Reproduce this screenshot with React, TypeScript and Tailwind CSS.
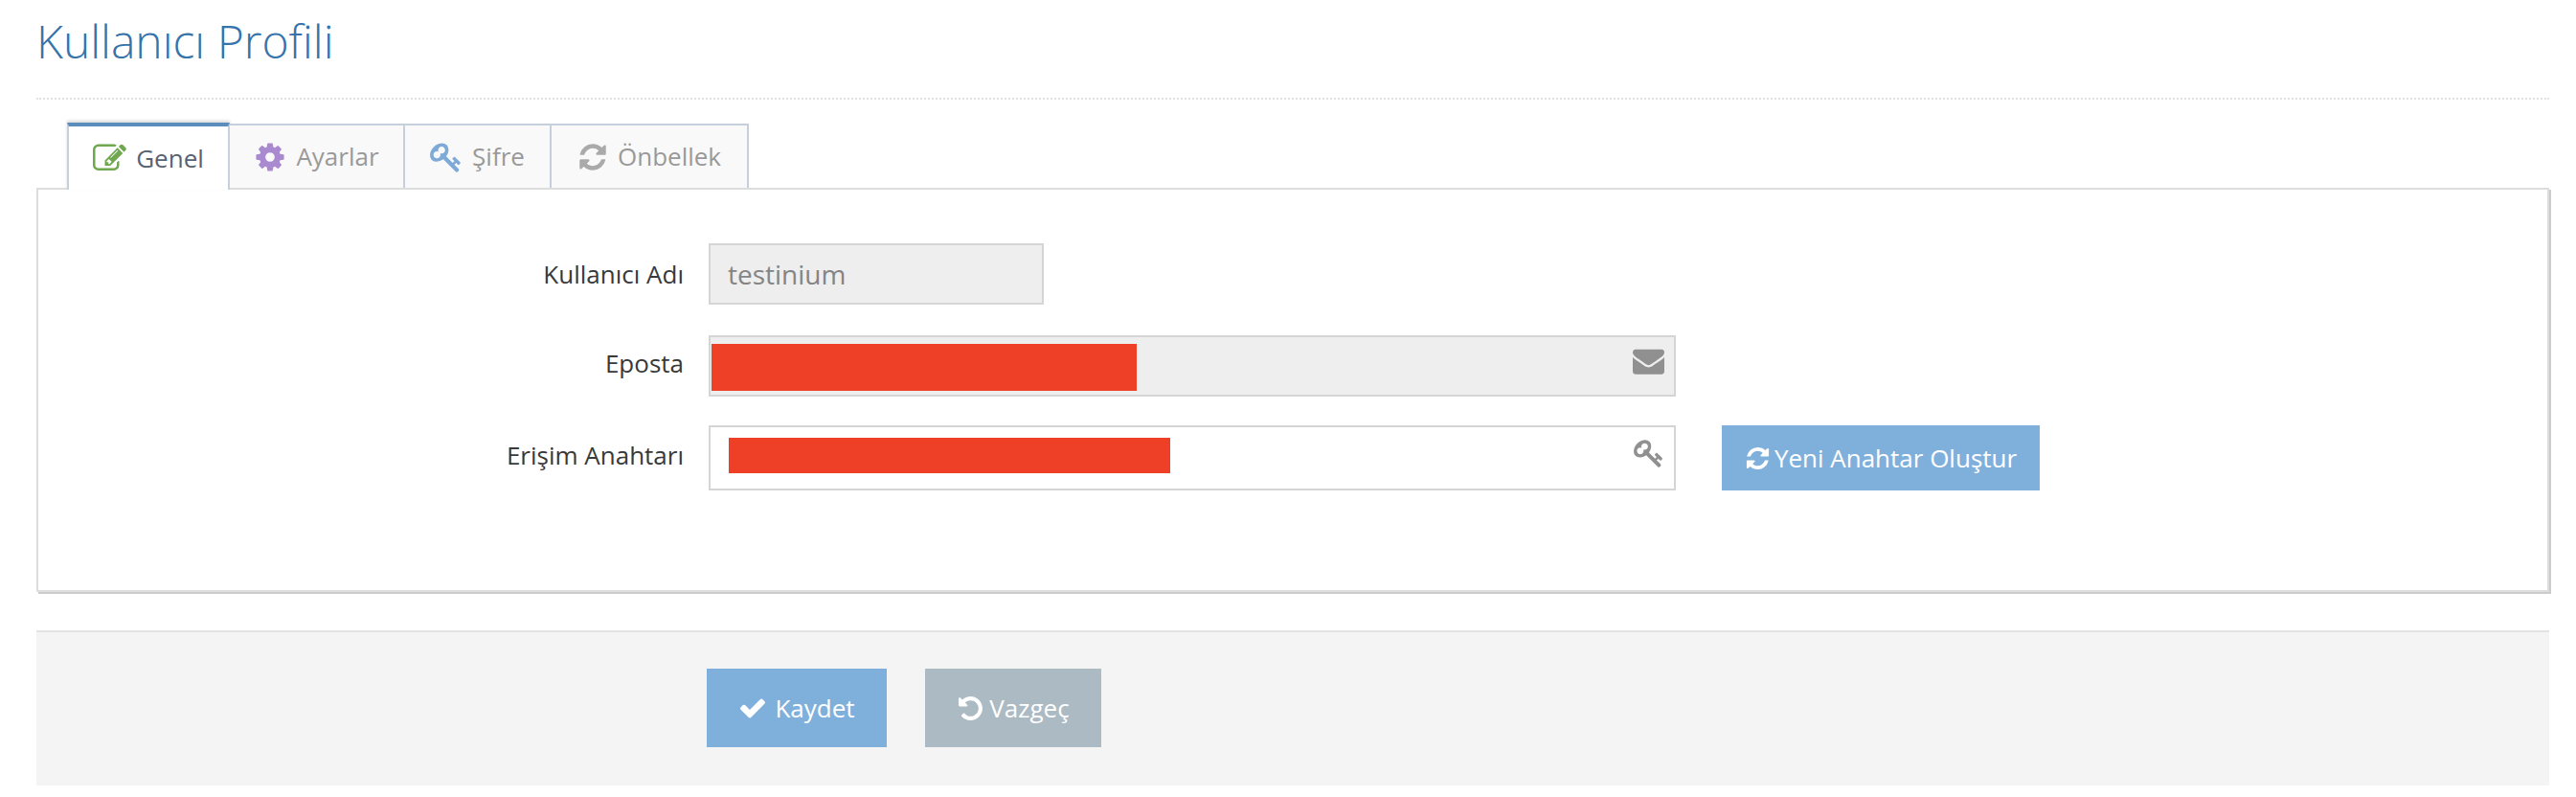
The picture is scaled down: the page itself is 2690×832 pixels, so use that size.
const ICONS = {
  edit: 'M888 1184l116-116-152-152-116 116v56h96v96h56zm440-720q-16-16-33 1l-350 350q-17 17-1 33t33-1l350-350q17-17 1-33zm80 594v190q0 119-84.5 203.5t-203.5 84.5h-832q-119 0-203.5-84.5t-84.5-203.5v-832q0-119 84.5-203.5t203.5-84.5h832q63 0 117 25 15 7 18 23 3 17-9 29l-49 49q-14 14-32 8-23-6-45-6h-832q-66 0-113 47t-47 113v832q0 66 47 113t113 47h832q66 0 113-47t47-113v-126q0-13 9-22l64-64q15-15 35-7t20 29zm-96-738l288 288-672 672h-288v-288zm444 132l-92 92-288-288 92-92q27-27 68-27t68 27l152 152q27 27 27 68t-27 68z',
  cog: 'M1152 896q0-106-75-181t-181-75-181 75-75 181 75 181 181 75 181-75 75-181zm512-109v222q0 12-8 23t-20 13l-185 28q-19 54-39 91 35 50 107 138 10 12 10 25t-9 23q-27 37-99 108t-94 71q-12 0-26-9l-138-108q-44 23-91 38-16 136-29 186-7 28-36 28h-222q-14 0-24.5-8.5t-11.5-21.5l-28-184q-49-16-90-37l-141 107q-10 9-25 9-14 0-25-11-126-114-165-168-7-10-7-23 0-12 8-23 15-21 51-66.5t54-70.5q-27-50-41-99l-183-27q-13-2-21-12.5t-8-23.5v-222q0-12 8-23t19-13l186-28q14-46 39-92-40-57-107-138-10-12-10-24 0-10 9-23 26-36 98.5-107.5t94.5-71.5q13 0 26 10l138 107q44-23 91-38 16-136 29-186 7-28 36-28h222q14 0 24.5 8.5t11.5 21.5l28 184q49 16 90 37l142-107q9-9 24-9 13 0 25 10 129 119 165 170 7 8 7 22 0 12-8 23-15 21-51 66.5t-54 70.5q26 50 41 98l183 28q13 2 21 12.5t8 23.5z',
  key: 'M832 512q0-80-56-136t-136-56-136 56-56 136q0 42 19 83-41-19-83-19-80 0-136 56t-56 136 56 136 136 56 136-56 56-136q0-42-19-83 41 19 83 19 80 0 136-56t56-136zm851 704q0 17-49 66t-66 49q-9 0-28.5-16t-36.5-33-38.5-40-24.5-26l-96 96 220 220q28 28 28 68 0 42-39 81t-81 39q-40 0-68-28l-671-671q-176 131-365 131-163 0-265.5-102.5t-102.5-265.5q0-160 95-313t248-248 313-95q163 0 265.5 102.5t102.5 265.5q0 189-131 365l355 355 96-96q-3-3-26-24.5t-40-38.5-33-36.5-16-28.5q0-17 49-66t66-49q13 0 23 10 6 6 46 44.5t82 79.5 86.5 86 73 78 28.5 41z',
  refresh: 'M1639 1056q0 5-1 7-64 268-268 434.5t-478 166.5q-146 0-282.5-55t-243.5-157l-129 129q-19 19-45 19t-45-19-19-45v-448q0-26 19-45t45-19h448q26 0 45 19t19 45-19 45l-137 137q71 66 161 102t187 36q134 0 250-65t186-179q11-17 53-117 8-23 30-23h192q13 0 22.5 9.5t9.5 22.5zm25-800v448q0 26-19 45t-45 19h-448q-26 0-45-19t-19-45 19-45l138-138q-148-137-349-137-134 0-250 65t-186 179q-11 17-53 117-8 23-30 23h-199q-13 0-22.5-9.5t-9.5-22.5v-7q65-268 270-434.5t480-166.5q146 0 284 55.5t245 156.5l130-129q19-19 45-19t45 19 19 45z',
  envelope: 'M1792 710v794q0 66-47 113t-113 47h-1472q-66 0-113-47t-47-113v-794q44 49 101 87 362 246 497 345 57 42 92.5 65.5t94.5 48 110 24.5h2q51 0 110-24.5t94.5-48 92.5-65.5q170-123 498-345 57-39 100-87zm0-294q0 79-49 151t-122 123q-376 261-468 325-10 7-42.5 30.5t-54 38-52 32.5-57.5 27-50 9h-2q-23 0-50-9t-57.5-27-52-32.5-54-38-42.5-30.5q-91-64-262-182.5t-205-142.5q-62-42-117-115.5t-55-136.5q0-78 41.5-130t118.5-52h1472q65 0 112.5 47t47.5 113z',
  check: 'M1671 566q0 40-28 68l-724 724-136 136q-28 28-68 28t-68-28l-136-136-362-362q-28-28-28-68t28-68l136-136q28-28 68-28t68 28l294 295 656-657q28-28 68-28t68 28l136 136q28 28 28 68z',
  undo: 'M1664 896q0 156-61 298t-164 245-245 164-298 61q-172 0-327-72.5t-264-204.5q-7-10-6.5-22.5t8.5-20.5l137-138q10-9 25-9 16 2 23 12 73 95 179 147t225 52q104 0 198.5-40.5t163.5-109.5 109.5-163.5 40.5-198.5-40.5-198.5-109.5-163.5-163.5-109.5-198.5-40.5q-98 0-188 35.5t-160 101.5l137 138q31 30 14 69-17 40-59 40h-448q-26 0-45-19t-19-45v-448q0-42 40-59 39-17 69 14l130 129q107-101 244.5-156.5t284.5-55.5q156 0 298 61t245 164 164 245 61 298z',
};

function Icon({ name, className }: { name: keyof typeof ICONS; className?: string }) {
  return (
    <svg viewBox="0 0 1792 1792" fill="currentColor" className={className}>
      <path d={ICONS[name]} />
    </svg>
  );
}

const tabs = [
  { label: 'Ayarlar', icon: <Icon name="cog" className="w-[34px] h-[34px] text-[#a989d0]" />, cls: 'w-[183px]' },
  { label: 'Şifre', icon: <Icon name="key" className="w-[34px] h-[34px] text-[#7eaad8]" />, cls: 'w-[153px]' },
  { label: 'Önbellek', icon: <Icon name="refresh" className="w-[32px] h-[32px] text-[#aaaaaa]" />, cls: 'w-[206px]' },
];

export default function App() {
  return (
    <div className="h-[832px] bg-white pl-[38px] pr-[28px] font-['Open_Sans',sans-serif] overflow-hidden">
      {/* Page header */}
      <div className="h-[104px] border-b-2 border-dotted border-[#e2e2e2] pt-[10px]">
        <h1 className="text-[48px] leading-[65px] font-light text-[#3573ab]">Kullanıcı Profili</h1>
      </div>

      {/* Tabs */}
      <div className="flex items-end h-[92px] pl-[32px] relative z-10">
        <div className="flex items-center justify-center gap-[10px] w-[170px] h-[70px] -mb-[2px] bg-white border-x-2 border-[#c5d0dc] border-t-4 border-t-[#5a8cbc] shadow-[0_-2px_3px_rgba(0,0,0,0.15)] text-[26px] text-[#576373]">
          <Icon name="edit" className="w-[35px] h-[35px] text-[#6fa84f]" />
          Genel
        </div>
        {tabs.map((t) => (
          <div
            key={t.label}
            className={`flex items-center justify-center gap-[10px] h-[67px] bg-[#f9f9f9] border-r-2 border-t-2 border-[#c5d0dc] text-[26px] text-[#999999] ${t.cls}`}
          >
            {t.icon}
            {t.label}
          </div>
        ))}
      </div>

      {/* Form panel */}
      <div className="h-[422px] border-2 border-[#dddddd] shadow-[2px_2px_0_#cccccc] pt-[56px] flex flex-col">
        <div className="flex items-center h-[64px]">
          <label className="w-[674px] text-right text-[26px] text-[#393939]">Kullanıcı Adı</label>
          <div className="ml-[26px] w-[350px] h-[64px] bg-[#eeeeee] border-2 border-[#d5d5d5] flex items-center pl-[18px] text-[28px] text-[#848484]">
            testinium
          </div>
        </div>
        <div className="flex items-center h-[64px] mt-[32px]">
          <label className="w-[674px] text-right text-[26px] text-[#393939] -mt-[6px]">Eposta</label>
          <div className="relative ml-[26px] w-[1010px] h-[64px] bg-[#eeeeee] border-2 border-[#d5d5d5]">
            <div className="absolute left-[1px] top-[7px] w-[444px] h-[49px] bg-[#ee4026]" />
            <Icon name="envelope" className="absolute right-[10px] top-[8px] w-[33px] h-[33px] text-[#909090]" />
          </div>
        </div>
        <div className="flex items-center h-[68px] mt-[30px]">
          <label className="w-[674px] text-right text-[26px] text-[#393939] -mt-[6px]">Erişim Anahtarı</label>
          <div className="relative ml-[26px] w-[1010px] h-[68px] bg-white border-2 border-[#d5d5d5]">
            <div className="absolute left-[19px] top-[11px] w-[461px] h-[37px] bg-[#ee4026]" />
            <Icon name="key" className="absolute right-[10px] top-[11px] w-[32px] h-[32px] text-[#909090]" />
          </div>
          <button className="ml-[48px] w-[332px] h-[68px] bg-[#7fb0dc] flex items-center justify-center gap-[4px] text-[26px] text-white">
            <Icon name="refresh" className="w-[27px] h-[27px]" />
            Yeni Anahtar Oluştur
          </button>
        </div>
      </div>

      {/* Form actions */}
      <div className="mt-[40px] h-[162px] bg-[#f4f4f4] border-t-2 border-[#e2e2e2] pt-[38px] pl-[700px] flex items-start gap-[40px]">
        <button className="w-[188px] h-[82px] bg-[#7fb0dc] flex items-center justify-center gap-[8px] text-[26px] text-white">
          <Icon name="check" className="w-[30px] h-[30px]" />
          Kaydet
        </button>
        <button className="w-[184px] h-[82px] bg-[#abbac3] flex items-center justify-center gap-[5px] text-[26px] text-white">
          <Icon name="undo" className="w-[29px] h-[29px]" />
          Vazgeç
        </button>
      </div>
    </div>
  );
}
